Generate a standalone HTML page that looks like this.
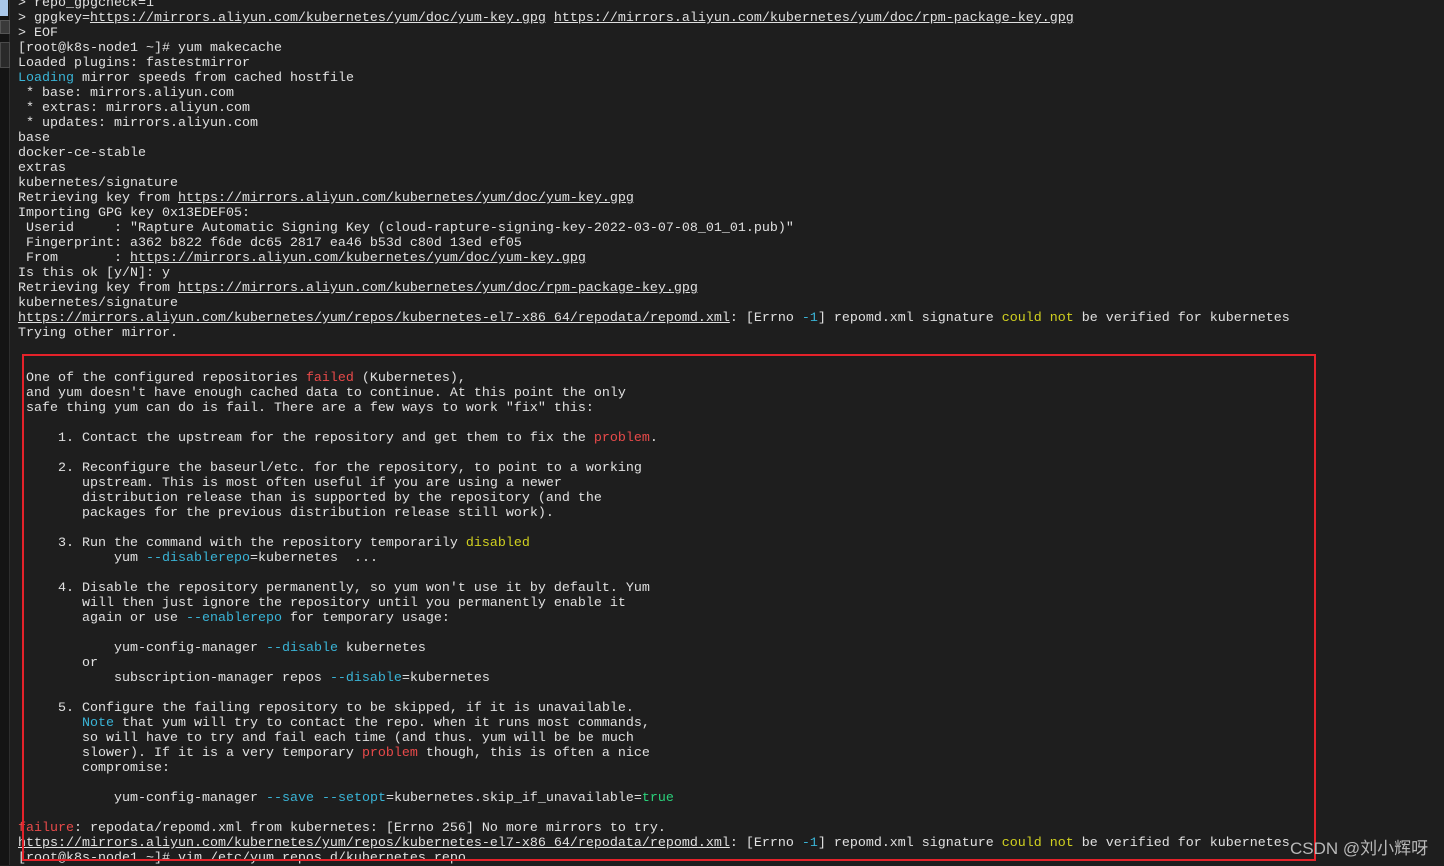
<!DOCTYPE html>
<html><head><meta charset="utf-8"><style>
html,body{margin:0;padding:0;width:1444px;height:865px;overflow:hidden;background:#1e1e1e}
.side{position:absolute;left:0;top:0;width:9px;height:865px;background:#141414;border-right:1px solid #2e2e2e}
.s1{position:absolute;left:0;top:0;width:8px;height:16px;background:#a9c8ea}
.s2{position:absolute;left:0;top:20px;width:8px;height:12px;background:#3a3a3a;border:1px solid #555}
.s3{position:absolute;left:0;top:42px;width:8px;height:24px;background:#2a2a2a;border:1px solid #4a4a4a}
pre{position:absolute;left:18px;top:-4px;margin:0;font-family:"Liberation Mono",monospace;font-size:13.33px;line-height:15px;color:#e0e0e0;white-space:pre}
u{text-decoration:underline}
.c{color:#3ab4d6}.r{color:#e84a4a}.y{color:#d0d020}.g{color:#2ad07a}
.box{position:absolute;left:22px;top:354px;width:1290px;height:503px;border:2px solid #e5222a}
.wm{position:absolute;left:1290px;top:834px;font-family:"Liberation Sans","Noto Sans CJK SC",sans-serif;font-size:17px;color:#b8b8b8}
</style></head><body>
<div class="side"><div class="s1"></div><div class="s2"></div><div class="s3"></div></div>
<pre>&gt; repo_gpgcheck=1
&gt; gpgkey=<u>https://mirrors.aliyun.com/kubernetes/yum/doc/yum-key.gpg</u> <u>https://mirrors.aliyun.com/kubernetes/yum/doc/rpm-package-key.gpg</u>
&gt; EOF
[root@k8s-node1 ~]# yum makecache
Loaded plugins: fastestmirror
<span class="c">Loading</span> mirror speeds from cached hostfile
 * base: mirrors.aliyun.com
 * extras: mirrors.aliyun.com
 * updates: mirrors.aliyun.com
base
docker-ce-stable
extras
kubernetes/signature
Retrieving key from <u>https://mirrors.aliyun.com/kubernetes/yum/doc/yum-key.gpg</u>
Importing GPG key 0x13EDEF05:
 Userid     : "Rapture Automatic Signing Key (cloud-rapture-signing-key-2022-03-07-08_01_01.pub)"
 Fingerprint: a362 b822 f6de dc65 2817 ea46 b53d c80d 13ed ef05
 From       : <u>https://mirrors.aliyun.com/kubernetes/yum/doc/yum-key.gpg</u>
Is this ok [y/N]: y
Retrieving key from <u>https://mirrors.aliyun.com/kubernetes/yum/doc/rpm-package-key.gpg</u>
kubernetes/signature
<u>https://mirrors.aliyun.com/kubernetes/yum/repos/kubernetes-el7-x86_64/repodata/repomd.xml</u>: [Errno <span class="c">-1</span>] repomd.xml signature <span class="y">could not</span> be verified for kubernetes
Trying other mirror.


 One of the configured repositories <span class="r">failed</span> (Kubernetes),
 and yum doesn't have enough cached data to continue. At this point the only
 safe thing yum can do is fail. There are a few ways to work "fix" this:

     1. Contact the upstream for the repository and get them to fix the <span class="r">problem</span>.

     2. Reconfigure the baseurl/etc. for the repository, to point to a working
        upstream. This is most often useful if you are using a newer
        distribution release than is supported by the repository (and the
        packages for the previous distribution release still work).

     3. Run the command with the repository temporarily <span class="y">disabled</span>
            yum <span class="c">--disablerepo</span>=kubernetes  ...

     4. Disable the repository permanently, so yum won't use it by default. Yum
        will then just ignore the repository until you permanently enable it
        again or use <span class="c">--enablerepo</span> for temporary usage:

            yum-config-manager <span class="c">--disable</span> kubernetes
        or
            subscription-manager repos <span class="c">--disable</span>=kubernetes

     5. Configure the failing repository to be skipped, if it is unavailable.
        <span class="c">Note</span> that yum will try to contact the repo. when it runs most commands,
        so will have to try and fail each time (and thus. yum will be be much
        slower). If it is a very temporary <span class="r">problem</span> though, this is often a nice
        compromise:

            yum-config-manager <span class="c">--save</span> <span class="c">--setopt</span>=kubernetes.skip_if_unavailable=<span class="g">true</span>

<span class="r">failure</span>: repodata/repomd.xml from kubernetes: [Errno 256] No more mirrors to try.
<u>https://mirrors.aliyun.com/kubernetes/yum/repos/kubernetes-el7-x86_64/repodata/repomd.xml</u>: [Errno <span class="c">-1</span>] repomd.xml signature <span class="y">could not</span> be verified for kubernetes
[root@k8s-node1 ~]# vim /etc/yum.repos.d/kubernetes.repo</pre>
<div class="box"></div>
<div class="wm">CSDN @刘小辉呀</div>
</body></html>
